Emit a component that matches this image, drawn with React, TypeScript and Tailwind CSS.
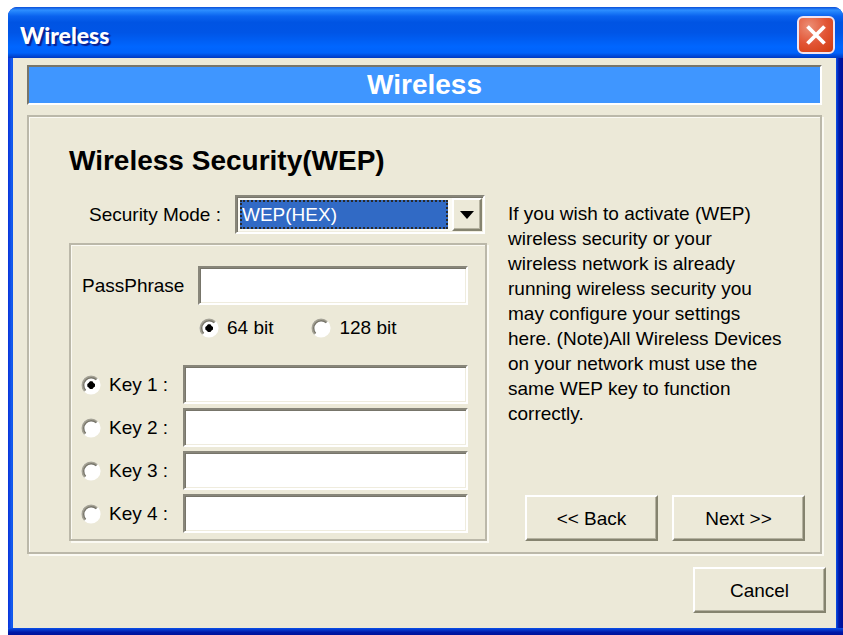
import { useState } from 'react'
import type { ReactNode } from 'react'
import clsx from 'clsx'

const SUNKEN =
  'border-2 border-t-[#88867a] border-l-[#88867a] border-r-white border-b-white shadow-[inset_1px_1px_0_#77756a,inset_-1px_-1px_0_#efecde]'
const RAISED =
  'border-2 border-t-white border-l-white border-r-[#85836f] border-b-[#85836f] shadow-[inset_-1px_-1px_0_#b5b2a0] bg-[#ece9d8]'
const ETCHED = 'border-2 border-[#bbb8a9] shadow-[inset_1px_1px_0_#fbfaf3,2px_2px_0_#fbfaf3]'

function PushButton({ children, className }: { children: ReactNode; className?: string }) {
  return (
    <button type="button" className={clsx('h-[46px] w-[133px]', RAISED, className)}>
      {children}
    </button>
  )
}

interface RadioProps {
  name: string
  label: string
  checked: boolean
  onChange: () => void
}

function Radio({ name, label, checked, onChange }: RadioProps) {
  return (
    <label className="flex items-center gap-2">
      <span className="grid size-5 place-items-center">
        <input
          type="radio"
          name={name}
          checked={checked}
          onChange={onChange}
          className="col-start-1 row-start-1 size-5 appearance-none"
        />
        <svg viewBox="0 0 20 20" className="pointer-events-none col-start-1 row-start-1 size-5">
          <circle cx="10" cy="10" r="9.6" fill="#fff" />
          <path d="M3.85 16.15A8.7 8.7 0 0 1 16.15 3.85" fill="none" stroke="#a5a294" strokeWidth="2" />
          <path d="M4.7 15.3A7.5 7.5 0 0 1 15.3 4.7" fill="none" stroke="#77756a" strokeWidth="1.4" />
          {checked && <path d="M9 6.3h2.4L12.6 8l1.4 1v2.4L12.6 12.4 11.4 14H9L7.6 12.4 6.3 11.4V9L7.6 8z" fill="#000" />}
        </svg>
      </span>
      {label}
    </label>
  )
}

function TitleBar() {
  return (
    <header className="flex h-[51px] items-center justify-between rounded-t-[9px] bg-[linear-gradient(180deg,#0a4fd8_0%,#2f8fff_6%,#2080fa_10%,#0a62ee_18%,#0054e3_30%,#0055e6_50%,#0066ff_78%,#0062fa_90%,#0038c0_100%)] pr-2 pl-3 pt-1">
      <h1 className="font-[Lato,sans-serif] text-[23px] leading-7 font-black text-white [text-shadow:2px_2px_1px_#0a1f8f]">
        Wireless
      </h1>
      <button
        type="button"
        aria-label="Close"
        className="grid size-[38px] place-items-center rounded-md border-2 border-[#f0e4f0] bg-[radial-gradient(circle_at_30%_25%,#ec8f76,#e25535_50%,#cf3a0c)]"
      >
        <svg viewBox="0 0 24 24" className="size-6">
          <path d="M3.5 3.5 20.5 20.5M20.5 3.5 3.5 20.5" stroke="#fff" strokeWidth="3.8" />
        </svg>
      </button>
    </header>
  )
}

export default function App() {
  const [bits, setBits] = useState('64')
  const [activeKey, setActiveKey] = useState(1)

  return (
    <main className="bg-white pt-[7px] pl-2 font-['Liberation_Sans',Arial,sans-serif] text-[19px] leading-[25px] text-black">
      <div className="rounded-t-[9px] bg-[#0a2fc8]">
        <TitleBar />
        <div className="bg-[linear-gradient(90deg,#0831d9,#1660f0_4px,#0a50e8_5px,transparent_5px,transparent_calc(100%-7px),#0a50e8_calc(100%-7px),#0018a8_calc(100%-4px),#00109a)] pr-[7px] pl-[5px]">
          <div className="bg-[#ece9d8] pt-[7px] pr-[10px] pb-[15px] pl-[14px]">
            <div className="mr-1 border-2 border-t-[#77756a] border-l-[#77756a] border-r-white border-b-white bg-[#3f96ff] text-center">
              <h2 className="text-[28px] leading-9 font-bold text-white">Wireless</h2>
            </div>

            <section className={clsx('mt-[10px] mr-1 flex pt-6 pr-[15px] pb-[11px] pl-10', ETCHED)}>
              <div className="w-[418px] shrink-0">
                <h3 className="text-[28px] leading-10 font-bold whitespace-nowrap">Wireless Security(WEP)</h3>
                <div className="mt-[14px] flex items-center justify-end pr-[2px]">
                  <label htmlFor="mode" className="mr-[14px]">
                    Security Mode :
                  </label>
                  <div className={clsx('flex h-[39px] w-[250px] gap-[2px] bg-[#fbfaf3] p-px', SUNKEN)}>
                    <select
                      id="mode"
                      className="m-[2px] min-w-0 flex-1 appearance-none border-2 border-dotted border-[#2a2a2a] bg-[#316ac5] text-white outline-none"
                    >
                      <option>WEP(HEX)</option>
                      <option>WEP(ASCII)</option>
                      <option>Disable</option>
                    </select>
                    <span className={clsx('pointer-events-none grid w-[30px] place-items-center', RAISED)}>
                      <svg viewBox="0 0 14 8" className="h-2 w-[14px]">
                        <path d="M0 0h14L7 8z" />
                      </svg>
                    </span>
                  </div>
                </div>

                <div className={clsx('mt-[9px] pt-[21px] pr-[17px] pb-[6px] pl-[10px]', ETCHED)}>
                  <div className="flex items-center justify-between">
                    <label htmlFor="phrase" className="pl-px">
                      PassPhrase
                    </label>
                    <input id="phrase" type="text" className={clsx('h-[39px] w-[270px] bg-white px-1', SUNKEN)} />
                  </div>
                  <div className="mt-[10px] mb-[25px] flex gap-[38px] pl-[118px]">
                    <Radio name="bits" label="64 bit" checked={bits === '64'} onChange={() => setBits('64')} />
                    <Radio name="bits" label="128 bit" checked={bits === '128'} onChange={() => setBits('128')} />
                  </div>
                  <div className="flex flex-col gap-1">
                    {[1, 2, 3, 4].map((n) => (
                      <div key={n} className="flex items-center justify-between">
                        <Radio
                          name="key"
                          label={`Key ${n} :`}
                          checked={activeKey === n}
                          onChange={() => setActiveKey(n)}
                        />
                        <input
                          type="text"
                          aria-label={`Key ${n} value`}
                          className={clsx('h-[39px] w-[285px] bg-white px-1', SUNKEN)}
                        />
                      </div>
                    ))}
                  </div>
                </div>
              </div>

              <div className="ml-[21px] flex flex-1 flex-col justify-between pt-[60px]">
                <p className="whitespace-nowrap">
                  If you wish to activate (WEP)
                  <br />
                  wireless security or your
                  <br />
                  wireless network is already
                  <br />
                  running wireless security you
                  <br />
                  may configure your settings
                  <br />
                  here. (Note)All Wireless Devices
                  <br />
                  on your network must use the
                  <br />
                  same WEP key to function
                  <br />
                  correctly.
                </p>
                <div className="flex justify-end gap-[14px]">
                  <PushButton>&lt;&lt; Back</PushButton>
                  <PushButton>Next &gt;&gt;</PushButton>
                </div>
              </div>
            </section>

            <div className="mt-[13px] flex justify-end">
              <PushButton>Cancel</PushButton>
            </div>
          </div>
        </div>
        <div className="h-[7px] bg-[linear-gradient(180deg,#0a50e8,#0018a8_60%,#00109a)]" />
      </div>
    </main>
  )
}
